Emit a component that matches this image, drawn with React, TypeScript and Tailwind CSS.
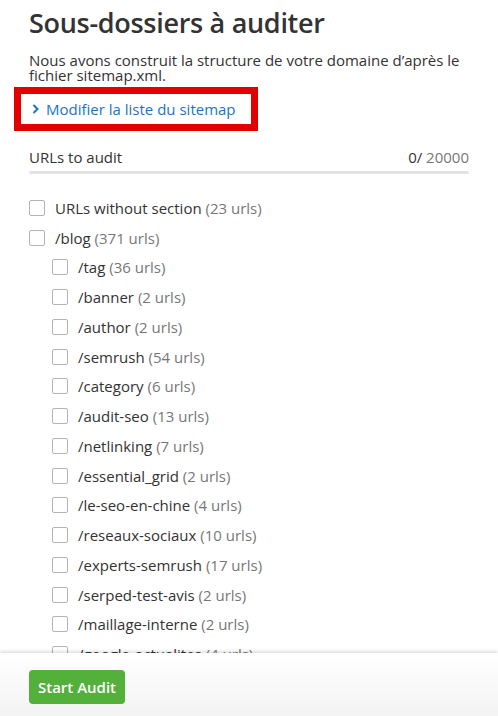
import React from "react";

type Item = { path: string; count: number; level: number };

const items: Item[] = [
  { path: "URLs without section", count: 23, level: 0 },
  { path: "/blog", count: 371, level: 0 },
  { path: "/tag", count: 36, level: 1 },
  { path: "/banner", count: 2, level: 1 },
  { path: "/author", count: 2, level: 1 },
  { path: "/semrush", count: 54, level: 1 },
  { path: "/category", count: 6, level: 1 },
  { path: "/audit-seo", count: 13, level: 1 },
  { path: "/netlinking", count: 7, level: 1 },
  { path: "/essential_grid", count: 2, level: 1 },
  { path: "/le-seo-en-chine", count: 4, level: 1 },
  { path: "/reseaux-sociaux", count: 10, level: 1 },
  { path: "/experts-semrush", count: 17, level: 1 },
  { path: "/serped-test-avis", count: 2, level: 1 },
  { path: "/maillage-interne", count: 2, level: 1 },
  { path: "/google-actualites", count: 4, level: 1 },
];

function Row({ item }: { item: Item }) {
  return (
    <label
      className={
        "flex h-[29.75px] items-center gap-[10px] " +
        (item.level === 1 ? "pl-[23px]" : "")
      }
    >
      <span className="block h-[16px] w-[16px] shrink-0 rounded-[2px] border border-[#b4b4b4] bg-white" />
      <span className="whitespace-nowrap text-[15px] leading-[20px] text-[#333]">
        {item.path} <span className="text-[#777]">({item.count} urls)</span>
      </span>
    </label>
  );
}

export default function App() {
  return (
    <div
      className="flex h-[716px] w-[498px] flex-col bg-white"
      style={{ fontFamily: "'Open Sans', 'Noto Sans', sans-serif" }}
    >
      <div className="pl-[29px] pr-[29px]">
        <h1 className="pt-[6px] text-[27px] font-semibold leading-[34px] tracking-[-0.3px] text-[#333]">
          Sous-dossiers à auditer
        </h1>
        <p className="mt-[13px] text-[15px] leading-[15px] text-[#333]">
          Nous avons construit la structure de votre domaine d’après le fichier sitemap.xml.
        </p>
      </div>

      <div className="ml-[14px] mt-[4px] w-[244px] border-[7px] border-[#e30000] px-[10px] py-[4px]">
        <a className="flex items-center gap-[6px] text-[15px] leading-[22px] text-[#1a74c6]">
          <svg width="9" height="12" viewBox="0 0 9 12" className="shrink-0">
            <path d="M2.5 2 L6.5 6 L2.5 10" stroke="#1a74c6" strokeWidth="2" fill="none" />
          </svg>
          Modifier la liste du sitemap
        </a>
      </div>

      <div className="pl-[29px] pr-[29px] pt-[16px]">
        <div className="flex items-center justify-between text-[15px] leading-[20px] text-[#333]">
          <span>URLs to audit</span>
          <span>
            0/ <span className="text-[#777]">20000</span>
          </span>
        </div>
        <div className="mt-[4px] h-[3px] w-full rounded-full bg-[#e3e3e3]" />
      </div>

      <div className="ml-[29px] mt-[9px] h-[470px] overflow-hidden pt-[10px]">
        {items.map((it) => (
          <Row key={it.path} item={it} />
        ))}
      </div>

      <div className="relative flex-1 bg-gradient-to-b from-white to-[#f3f3f3] pl-[29px] pt-[17px] shadow-[0_-2px_3px_rgba(0,0,0,0.12)]">
        <button className="h-[34px] w-[96px] rounded-[4px] bg-[#53b03b] text-[15px] font-semibold text-white">
          Start Audit
        </button>
      </div>
    </div>
  );
}
